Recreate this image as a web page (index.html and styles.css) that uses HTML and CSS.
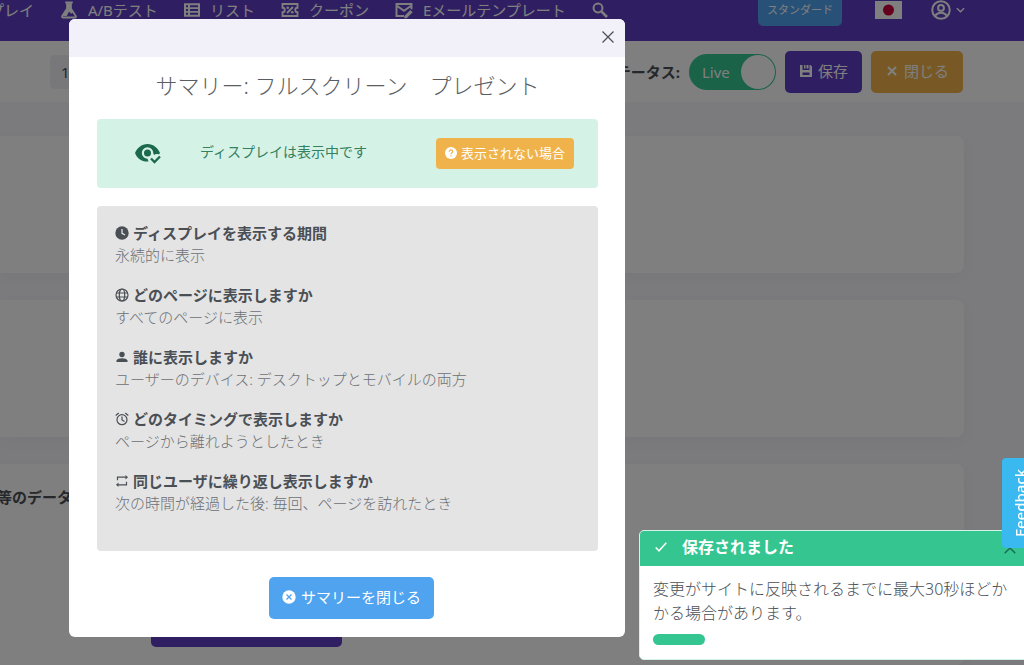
FILE: index.html
```html
<!DOCTYPE html>
<html lang="ja">
<head>
    <meta charset="UTF-8">
    <meta name="viewport" content="width=device-width, initial-scale=1.0">
    <title>サマリー</title>
    <link rel="stylesheet" href="styles.css">
</head>
<body>

<nav class="navbar">
    <a class="nav-link first" href="#">ディスプレイ</a>
    <a class="nav-link" href="#">
        <svg class="nav-icon" viewBox="0 0 24 24"><path fill="none" stroke="currentColor" stroke-width="2.4" stroke-linejoin="round" d="M7 2h10M9.500 2v8L3 20c-.6 1 0 2 1 2h16c1 0 1.600-1 1-2l-6.500-10V2"/><path fill="currentColor" d="M9 3h6v8l3 4-3 2-3-3-3 6H4l5-9z"/></svg>
        A/Bテスト
    </a>
    <a class="nav-link" href="#">
        <svg class="nav-icon small" viewBox="0 0 24 24"><path fill="currentColor" fill-rule="evenodd" d="M0 2h24v20H0zM3 5v3h3V5zM9 5v3h12V5zM3 10.500v3h3v-3zM9 10.500v3h12v-3zM3 16v3h3v-3zM9 16v3h12v-3z"/></svg>
        リスト
    </a>
    <a class="nav-link" href="#">
        <svg class="nav-icon" viewBox="0 0 24 24"><path fill="none" stroke="currentColor" stroke-width="2.500" d="M2 4h20v5a3 3 0 0 0 0 6v5H2v-5a3 3 0 0 0 0-6zM8 16l8-8"/><circle cx="9" cy="9" r="1.800" fill="currentColor"/><circle cx="15" cy="15" r="1.800" fill="currentColor"/></svg>
        クーポン
    </a>
    <a class="nav-link" href="#">
        <svg class="nav-icon" viewBox="0 0 24 24"><path fill="none" stroke="currentColor" stroke-width="2.600" d="M12 20H2V4h20v7M2 6l10 7 10-7"/><path fill="currentColor" d="M20.500 12l3 3-8 8h-3v-3z"/></svg>
        Eメールテンプレート
    </a>
    <button class="nav-button search" type="button" aria-label="検索">
        <svg class="search-icon" viewBox="0 0 24 24"><path fill="none" stroke="currentColor" stroke-width="4" d="M14 14l8.500 8.500"/><circle cx="9" cy="9" r="6.700" fill="none" stroke="currentColor" stroke-width="3"/></svg>
    </button>
    <a class="plan" href="#">スタンダード</a>
    <svg class="flag" viewBox="0 0 27 18"><path fill="#fff" d="M0 0h27v18H0z"/><circle cx="13.500" cy="9" r="5.500" fill="#c8003c"/></svg>
    <button class="nav-button account" type="button" aria-label="アカウント">
        <svg class="account-icon" viewBox="0 0 24 24"><g fill="none" stroke="currentColor" stroke-width="2.400"><circle cx="12" cy="12" r="10.500"/><circle cx="12" cy="9.500" r="3.500"/><path d="M5 19c3-5 11-5 14 0"/></g></svg>
        <svg class="caret" viewBox="0 0 10 6"><path fill="none" stroke="currentColor" stroke-width="1.600" d="M1 1l4 4 4-4"/></svg>
    </button>
</nav>

<header class="toolbar">
    <input class="name-input" type="text" value="1" aria-label="名前">
    <div class="toolbar-actions">
        <label class="status-label" for="status">ステータス:</label>
        <span class="switch">
            <input type="checkbox" id="status" checked>
            <span class="switch-text">Live</span>
            <span class="switch-knob"></span>
        </span>
        <button class="btn btn-purple" type="button">
            <svg class="icon" viewBox="0 0 14 14"><path fill="currentColor" fill-rule="evenodd" d="M1 1h2.500v5h7V1h1L13 2.500V13H1zM3.500 8.500v2.500h7V8.500zM5 1h1.500v3.500H5zM7.500 1H9.500v3.500h-2z"/></svg>
            保存
        </button>
        <button class="btn btn-orange" type="button">
            <svg class="icon" viewBox="0 0 14 14"><path fill="none" stroke="currentColor" stroke-width="2" d="M3 3l8 8M11 3l-8 8"/></svg>
            閉じる
        </button>
    </div>
</header>

<main class="content">
    <section class="card"></section>
    <section class="card"></section>
    <section class="card last">
        <h3>等のデータ</h3>
        <button class="submit" type="button" aria-label="送信"></button>
    </section>
</main>

<div class="overlay">
    <div class="modal" role="dialog" aria-modal="true" aria-labelledby="modalTitle">
        <div class="modal-header">
            <button class="modal-close" type="button" aria-label="閉じる">
                <svg viewBox="0 0 12 12"><path fill="none" stroke="currentColor" stroke-width="1.200" d="M.5.5l11 11M11.500.5l-11 11"/></svg>
            </button>
        </div>
        <div class="modal-body">
            <h2 id="modalTitle">サマリー: フルスクリーン　プレゼント</h2>
            <div class="alert">
                <svg class="eye" viewBox="0 0 26 20"><path fill="currentColor" fill-rule="evenodd" d="M0 9C2 4 6.500 0 12.500 0S23 4 25 9l-1 1.500c-2-.8-3.500-.5-5 .5l-.8-2a5.700 5.700 0 1 0-5.700 5.700l1 2.800C7 18 2 14.500 0 9z"/><circle cx="12.500" cy="9" r="3.500" fill="currentColor"/><path fill="none" stroke="currentColor" stroke-width="2.300" d="M16 14.500l3.500 3.500L25 12.500"/></svg>
                <span class="alert-text">ディスプレイは表示中です</span>
                <button class="btn btn-help" type="button">
                    <svg class="help-icon" viewBox="0 0 14 14"><circle cx="7" cy="7" r="7" fill="currentColor"/><path fill="none" stroke="#f0b34b" stroke-width="1.400" d="M5 5.500c0-3 4-2.500 4-.3C9 6.700 7 6.800 7 8.600M7 9.700v1.400"/></svg>
                    表示されない場合
                </button>
            </div>
            <dl class="summary">
                <dt>
                    <svg class="icon" viewBox="0 0 14 14"><circle cx="7" cy="7" r="6.700" fill="currentColor"/><path fill="none" stroke="#e4e4e4" stroke-width="1.300" d="M7 3v4.300l3 1.700"/></svg>
                    ディスプレイを表示する期間
                </dt>
                <dd>永続的に表示</dd>
                <dt>
                    <svg class="icon" viewBox="0 0 14 14"><g fill="none" stroke="currentColor" stroke-width="1.200"><circle cx="7" cy="7" r="6"/><ellipse cx="7" cy="7" rx="2.700" ry="6"/><path d="M1 5h12M1 9h12"/></g></svg>
                    どのページに表示しますか
                </dt>
                <dd>すべてのページに表示</dd>
                <dt>
                    <svg class="icon" viewBox="0 0 14 14"><circle cx="7" cy="4.500" r="2.700" fill="currentColor"/><path fill="currentColor" d="M1.500 12v-1.500C2.500 7.500 11.500 7.500 12.500 10.500V12z"/></svg>
                    誰に表示しますか
                </dt>
                <dd>ユーザーのデバイス: デスクトップとモバイルの両方</dd>
                <dt>
                    <svg class="icon" viewBox="0 0 14 14"><g fill="none" stroke="currentColor" stroke-width="1.200"><circle cx="7" cy="7.700" r="5"/><path d="M7 4.500V8l2.500 1.500M.7 3.500L3.700 1M13.300 3.500L10.300 1"/></g></svg>
                    どのタイミングで表示しますか
                </dt>
                <dd>ページから離れようとしたとき</dd>
                <dt>
                    <svg class="icon" viewBox="0 0 14 14"><path fill="none" stroke="currentColor" stroke-width="1.200" d="M2.500 6.300V3.200H11M11.500 7.700v3.100H3"/><path fill="currentColor" d="M10.500 1l2.500 2.200-2.500 2.300zM3.500 8.500L1 10.800 3.500 13z"/></svg>
                    同じユーザに繰り返し表示しますか
                </dt>
                <dd>次の時間が経過した後: 毎回、ページを訪れたとき</dd>
            </dl>
            <button class="btn btn-blue" type="button">
                <svg class="icon" viewBox="0 0 14 14"><circle cx="7" cy="7" r="6.700" fill="currentColor"/><path fill="none" stroke="#4fa3ef" stroke-width="1.300" d="M4.500 4.500l5 5M9.500 4.500l-5 5"/></svg>
                サマリーを閉じる
            </button>
        </div>
    </div>
</div>

<div class="toast" role="status">
    <div class="toast-header">
        <svg class="check" viewBox="0 0 12 10"><path fill="none" stroke="currentColor" stroke-width="1.500" d="M.7 5.500l3.300 3.300L11.300.8"/></svg>
        <strong>保存されました</strong>
        <button class="toast-toggle" type="button" aria-label="たたむ">
            <svg viewBox="0 0 12 7"><path fill="none" stroke="currentColor" stroke-width="1.400" d="M.7 6.300L6 1l5.300 5.300"/></svg>
        </button>
    </div>
    <div class="toast-body">
        変更がサイトに反映されるまでに最大30秒ほどかかる場合があります。
        <div class="toast-progress"></div>
    </div>
</div>

<button class="feedback" type="button">Feedback</button>

</body>
</html>
```

FILE: styles.css
```css
* {
    box-sizing: border-box;
}
body {
    margin: 0;
    min-height: 100vh;
    overflow: hidden;
    display: flex;
    flex-direction: column;
    background: #f6f6fa;
    color: #4a4f55;
    font-family: "Noto Sans", "Noto Sans CJK JP", sans-serif;
    font-size: 15px;
    line-height: 22px;
}
button,
input {
    font: inherit;
    color: inherit;
}
button {
    padding: 0;
    border: none;
    background: none;
    white-space: nowrap;
    cursor: pointer;
}
svg {
    display: block;
    flex: none;
}
.icon {
    width: 14px;
    height: 14px;
}

/* top navigation */
.navbar {
    display: flex;
    align-items: center;
    height: 41px;
    padding: 0 59px 22px 0;
    background: #5e3ec4;
    color: #fff;
    white-space: nowrap;
}
.nav-link {
    display: flex;
    align-items: center;
    gap: 10px;
    margin-right: 26px;
    color: inherit;
    text-decoration: none;
}
.nav-link.first {
    margin-left: -55px;
}
.nav-icon {
    width: 18px;
    height: 18px;
}
.nav-icon.small {
    width: 16px;
    height: 16px;
}
.search-icon {
    width: 16px;
    height: 16px;
}
.plan {
    margin: 0 33px 0 auto;
    padding: 8px 9px;
    border-radius: 5px;
    background: #4fa3ef;
    color: #fff;
    font-size: 11px;
    line-height: 16px;
    text-decoration: none;
}
.flag {
    width: 27px;
    height: 18px;
    margin-right: 29px;
}
.account {
    display: flex;
    align-items: center;
    gap: 5px;
}
.account-icon {
    width: 20px;
    height: 20px;
}
.caret {
    width: 9px;
    height: 6px;
}

/* toolbar */
.toolbar {
    display: flex;
    align-items: center;
    justify-content: space-between;
    height: 61px;
    padding: 0 61px 0 50px;
    background: #fff;
}
.name-input {
    width: 300px;
    height: 34px;
    padding: 0 11px;
    border: none;
    border-radius: 5px;
    background: #f0f0f5;
}
.toolbar-actions {
    display: flex;
    align-items: center;
    gap: 9px;
}
.status-label {
    font-weight: bold;
}
.switch {
    display: flex;
    align-items: center;
    justify-content: space-between;
    position: relative;
    width: 87px;
    height: 36px;
    padding: 1px 1px 1px 13px;
    border-radius: 18px;
    background: #35c590;
    color: #fff;
}
.switch input {
    position: absolute;
    inset: 0;
    width: 100%;
    height: 100%;
    margin: 0;
    opacity: 0;
}
.switch-knob {
    width: 34px;
    height: 34px;
    border-radius: 50%;
    background: #fff;
}
.btn {
    display: flex;
    align-items: center;
    justify-content: center;
    gap: 5px;
    height: 42px;
    padding: 0 14px 2px;
    border-radius: 5px;
    color: #fff;
}
.btn-purple {
    background: #5e3ec4;
}
.btn-orange {
    background: #f0b34b;
}
.btn-blue {
    padding: 0 13px 2px;
    background: #4fa3ef;
}
.btn-help {
    gap: 4px;
    height: 31px;
    padding: 0 9px 2px;
    border-radius: 4px;
    background: #f0b34b;
    font-size: 13px;
}
.help-icon {
    width: 12px;
    height: 12px;
}

/* page cards */
.content {
    flex: 1;
    display: flex;
    flex-direction: column;
    gap: 27px;
    padding: 34px 60px 0 0;
}
.card {
    height: 137px;
    border-radius: 0 8px 8px 0;
    background: #fff;
    box-shadow: 0 4px 16px rgba(0, 0, 0, 0.03);
}
.card.last {
    flex: 1;
    height: auto;
    padding-top: 22px;
}
.card h3 {
    margin: 0 0 97px -3px;
    font-size: 15px;
}
.submit {
    display: block;
    width: 191px;
    height: 42px;
    margin-left: 151px;
    border-radius: 5px;
    background: #5e3ec4;
}

/* modal */
.overlay {
    position: fixed;
    inset: 0;
    padding: 19px 69px;
    background: rgba(0, 0, 0, 0.5);
}
.modal {
    max-width: 556px;
    border-radius: 6px;
    overflow: hidden;
    background: #fff;
}
.modal-header {
    display: flex;
    align-items: center;
    justify-content: flex-end;
    height: 38px;
    padding: 0 11px 2px;
    background: #f2f1f9;
}
.modal-close svg {
    width: 12px;
    height: 12px;
}
.modal-body {
    display: flex;
    flex-direction: column;
    padding: 12px 27px 18px 28px;
}
.modal-body h2 {
    margin: 0 0 18px;
    color: #5a5e62;
    font-size: 22px;
    font-weight: 300;
    line-height: 32px;
    text-align: center;
}
.alert {
    display: flex;
    align-items: center;
    height: 69px;
    padding: 0 24px 0 38px;
    border-radius: 4px;
    background: #d5f2e7;
    color: #1c6a4d;
}
.eye {
    width: 26px;
    height: 20px;
}
.alert-text {
    margin: 0 auto 0 39px;
    padding-bottom: 3px;
    color: #34805f;
    font-size: 14px;
}
.summary {
    margin: 18px 0 26px;
    padding: 16px 18px 19px;
    border-radius: 4px;
    background: #e4e4e4;
}
.summary dt {
    display: flex;
    align-items: center;
    gap: 4px;
    font-weight: bold;
}
.summary dd {
    margin: 0 0 18px;
    color: #6c7074;
    font-weight: 300;
}
.modal-body .btn-blue {
    align-self: center;
    margin-left: 8px;
}

/* toast */
.toast {
    position: fixed;
    right: -15px;
    bottom: 5px;
    width: 400px;
    border: 1px solid #d5f2e7;
    border-radius: 5px;
    overflow: hidden;
    background: #fff;
    font-size: 16px;
    line-height: 24px;
}
.toast-header {
    display: flex;
    align-items: center;
    gap: 15px;
    height: 35px;
    padding: 0 22px 3px 15px;
    background: #35c590;
    color: #fff;
}
.check {
    width: 12px;
    height: 10px;
}
.toast-toggle {
    margin-left: auto;
    padding-top: 6px;
    color: #1c6a4d;
}
.toast-toggle svg {
    width: 12px;
    height: 7px;
}
.toast-body {
    padding: 11px 26px 14px 13px;
    font-weight: 300;
}
.toast-progress {
    width: 52px;
    height: 11px;
    margin-top: 9px;
    border-radius: 6px;
    background: #35c590;
}

/* feedback tab on the right edge */
.feedback {
    position: fixed;
    right: -15px;
    top: 458px;
    width: 37px;
    height: 90px;
    border-radius: 0 4px 4px 0;
    background: #3ab8f0;
    color: #fff;
    font-weight: 500;
    writing-mode: vertical-rl;
    transform: rotate(180deg);
}
```
